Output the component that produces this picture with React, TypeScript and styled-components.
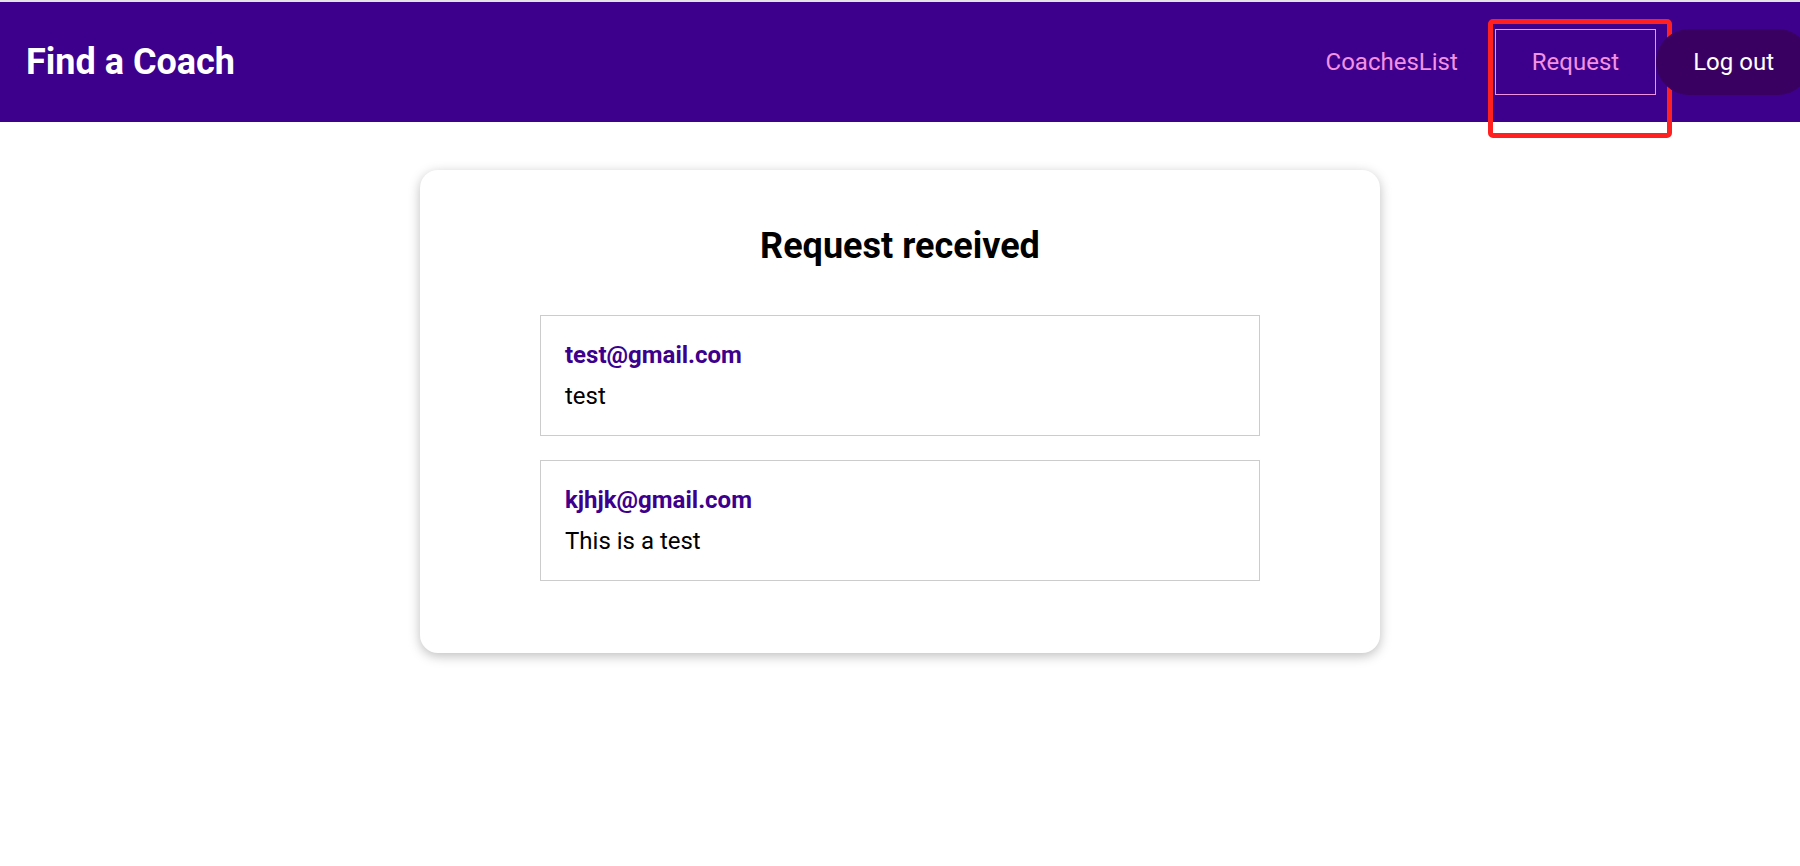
import React from "react";
import styled, { createGlobalStyle } from "styled-components";

const GlobalStyle = createGlobalStyle`
  * { box-sizing: border-box; }
  html, body { margin: 0; padding: 0; }
  body {
    font-family: Roboto, "Liberation Sans", Arial, sans-serif;
    background: #ffffff;
    border-top: 2px solid #e3e3e3;
    color: #000;
  }
`;

const Header = styled.header`
  position: relative;
  z-index: 1;
  width: 100%;
  height: 120px;
  background-color: #3d008d;
  display: flex;
  align-items: center;
  overflow-x: clip;
  overflow-y: visible;
`;

const Nav = styled.nav`
  flex: 1;
  display: flex;
  align-items: center;
  justify-content: space-between;
  padding-left: 26px;
`;

const Brand = styled.h1`
  margin: 0;
  font-size: 36px;
  font-weight: 700;
  color: #ffffff;
`;

const NavList = styled.ul`
  list-style: none;
  margin: 0 -11px 0 0;
  padding: 0;
  display: flex;
  align-items: center;
`;

const NavItem = styled.li`
  position: relative;
  display: flex;
`;

const NavLink = styled.a<{ $active?: boolean }>`
  display: inline-block;
  text-decoration: none;
  color: #f391e3;
  font-size: 24px;
  line-height: 28px;
  padding: 18px 36px;
  border: 1px solid ${(p) => (p.$active ? "#f391e3" : "transparent")};
`;

const LogoutButton = styled.button`
  font: inherit;
  font-size: 24px;
  line-height: 28px;
  padding: 18px 36px;
  background-color: #3a0061;
  border: 1px solid #3a0061;
  color: #ffffff;
  border-radius: 45px;
  cursor: pointer;
  white-space: nowrap;
`;

const Highlight = styled.span`
  position: absolute;
  left: -7px;
  top: -10px;
  width: 184px;
  height: 119px;
  border: 5px solid #ff2121;
  border-radius: 5px;
  pointer-events: none;
`;

const Main = styled.main`
  display: block;
`;

const Card = styled.section`
  max-width: 960px;
  margin: 48px auto;
  padding: 24px;
  border-radius: 18px;
  background: #ffffff;
  box-shadow: 0 3px 12px rgba(0, 0, 0, 0.26);
`;

const CardTitle = styled.h2`
  margin: 31px 0 29px;
  text-align: center;
  font-size: 36px;
  font-weight: 700;
  color: #000;
`;

const RequestList = styled.ul`
  list-style: none;
  margin: 48px auto;
  padding: 0;
  max-width: 720px;
`;

const RequestItem = styled.li`
  margin: 24px 0;
  border: 1px solid #cccccc;
  padding: 25px 24px;
`;

const Email = styled.a`
  color: #3d008d;
  text-decoration: none;
  font-weight: 700;
  font-size: 24px;
  line-height: 29px;
`;

const Message = styled.p`
  margin: 12px 0 0 0;
  font-size: 24px;
  line-height: 28px;
  color: #000;
`;

const requests = [
  { email: "test@gmail.com", message: "test" },
  { email: "kjhjk@gmail.com", message: "This is a test" },
];

export default function App() {
  return (
    <>
      <GlobalStyle />
      <Header>
        <Nav>
          <Brand>Find a Coach</Brand>
          <NavList>
            <NavItem>
              <NavLink href="#">CoachesList</NavLink>
            </NavItem>
            <NavItem>
              <NavLink href="#" $active>
                Request
              </NavLink>
              <Highlight />
            </NavItem>
            <NavItem>
              <LogoutButton>Log out</LogoutButton>
            </NavItem>
          </NavList>
        </Nav>
      </Header>
      <Main>
        <Card>
          <header>
            <CardTitle>Request received</CardTitle>
          </header>
          <RequestList>
            {requests.map((r) => (
              <RequestItem key={r.email}>
                <div>
                  <Email href={`mailto:${r.email}`}>{r.email}</Email>
                </div>
                <Message>{r.message}</Message>
              </RequestItem>
            ))}
          </RequestList>
        </Card>
      </Main>
    </>
  );
}
